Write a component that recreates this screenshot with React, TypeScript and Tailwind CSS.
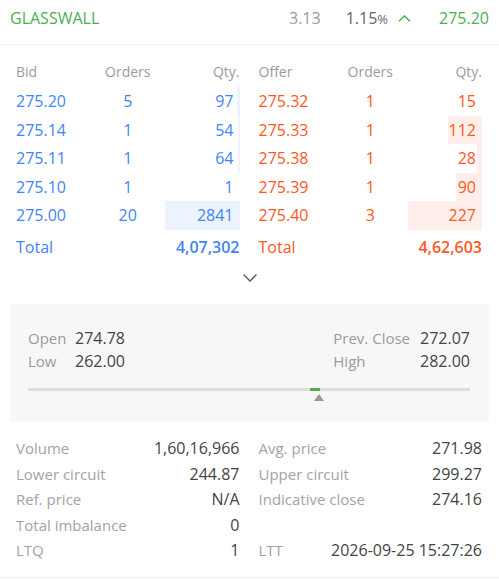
type Level = { price: string; orders: number; qty: number };

const bids: Level[] = [
  { price: '275.20', orders: 5, qty: 97 },
  { price: '275.14', orders: 1, qty: 54 },
  { price: '275.11', orders: 1, qty: 64 },
  { price: '275.10', orders: 1, qty: 1 },
  { price: '275.00', orders: 20, qty: 2841 },
];

const offers: Level[] = [
  { price: '275.32', orders: 1, qty: 15 },
  { price: '275.33', orders: 1, qty: 112 },
  { price: '275.38', orders: 1, qty: 28 },
  { price: '275.39', orders: 1, qty: 90 },
  { price: '275.40', orders: 3, qty: 227 },
];

function DepthTable({
  side,
  levels,
  total,
}: {
  side: 'bid' | 'offer';
  levels: Level[];
  total: string;
}) {
  const qtys = levels.map((l) => l.qty);
  const max = Math.max(...qtys);
  const min = Math.min(...qtys);
  const isBid = side === 'bid';
  const text = isBid ? 'text-[#4184f3]' : 'text-[#ff5722]';
  const bar = isBid ? 'bg-[#ecf2fe]' : 'bg-[#ffeee9]';

  return (
    <div>
      <div className="grid grid-cols-3 h-[30px] items-center text-[14px] text-[#9b9b9b]">
        <span>{isBid ? 'Bid' : 'Offer'}</span>
        <span className="text-center">Orders</span>
        <span className="text-right">Qty.</span>
      </div>
      {levels.map((l) => (
        <div key={l.price} className={`grid grid-cols-3 h-[28.5px] items-center ${text}`}>
          <span>{l.price}</span>
          <span className="text-center">{l.orders}</span>
          <span className="relative h-full flex items-center justify-end pr-[6px]">
            <span
              className={`absolute right-0 top-0 bottom-0 ${bar}`}
              style={{ width: `${((l.qty - min) / (max - min)) * 100}%` }}
            />
            <span className="relative">{l.qty}</span>
          </span>
        </div>
      ))}
      <div className={`flex justify-between h-[35px] items-center ${text}`}>
        <span>Total</span>
        <span className="font-semibold">{total}</span>
      </div>
    </div>
  );
}

function Stat({ label, value }: { label: string; value: string }) {
  return (
    <div className="flex justify-between h-[25.5px] items-center">
      <span className="text-[15px] text-[#a3a3a3]">{label}</span>
      <span className="text-[#444]">{value}</span>
    </div>
  );
}

export default function App() {
  return (
    <div className="w-full bg-white text-[16px] leading-6 font-['Open_Sans',sans-serif]">
      {/* Instrument header */}
      <div className="h-[45px] border-b border-[#eee] px-2.5 pt-[6px] flex items-start">
        <span className="text-[#4caf50] flex-1">GLASSWALL</span>
        <span className="text-[#9b9b9b]">3.13</span>
        <span className="text-[#666] ml-[25px]">
          1.15<span className="text-[13px]">%</span>
        </span>
        <svg className="ml-[10px] mt-[9px]" width="13" height="7" viewBox="0 0 13 7" fill="none">
          <polyline points="1,6.2 6.5,0.9 12,6.2" stroke="#4caf50" strokeWidth="1.4" />
        </svg>
        <span className="text-[#4caf50] ml-[28px]">275.20</span>
      </div>

      {/* Market depth */}
      <div className="grid grid-cols-2 gap-[19px] pl-4 pr-[17px] pt-3">
        <DepthTable side="bid" levels={bids} total="4,07,302" />
        <DepthTable side="offer" levels={offers} total="4,62,603" />
      </div>

      <div className="flex justify-center mt-[8px]">
        <svg width="16" height="10" viewBox="0 0 16 10" fill="none">
          <polyline points="1.5,1.5 8,8 14.5,1.5" stroke="#555" strokeWidth="1.3" />
        </svg>
      </div>

      {/* OHLC range */}
      <div className="mx-2.5 mt-[21px] rounded-[3px] bg-[#f7f7f7] pl-[18px] pr-[19px] pt-[23px] pb-[22px]">
        <div className="flex justify-between">
          <div className="grid grid-cols-[47px_auto]">
            <span className="h-[23px] flex items-center text-[15px] text-[#9b9b9b]">Open</span>
            <span className="h-[23px] flex items-center text-[#444]">274.78</span>
            <span className="h-[23px] flex items-center text-[15px] text-[#9b9b9b]">Low</span>
            <span className="h-[23px] flex items-center text-[#444]">262.00</span>
          </div>
          <div className="grid grid-cols-[auto_auto] gap-x-[10px]">
            <span className="h-[23px] flex items-center text-[15px] text-[#9b9b9b]">Prev. Close</span>
            <span className="h-[23px] flex items-center justify-end text-[#444]">272.07</span>
            <span className="h-[23px] flex items-center text-[15px] text-[#9b9b9b]">High</span>
            <span className="h-[23px] flex items-center justify-end text-[#444]">282.00</span>
          </div>
        </div>
        <div className="relative mt-[15px] h-[3px] bg-[#ddd]">
          <div className="absolute top-0 left-[282px] w-[10px] h-[3px] bg-[#4caf50]" />
          <div className="absolute top-[6px] left-[286px] w-0 h-0 border-l-[5px] border-r-[5px] border-b-[7px] border-l-transparent border-r-transparent border-b-[#999]" />
        </div>
        <div className="h-[9px]" />
      </div>

      {/* Session stats */}
      <div className="grid grid-cols-2 gap-[19px] pl-4 pr-[17px] mt-[14px] pb-[14px] border-b border-[#eee]">
        <div>
          <Stat label="Volume" value="1,60,16,966" />
          <Stat label="Lower circuit" value="244.87" />
          <Stat label="Ref. price" value="N/A" />
          <Stat label="Total imbalance" value="0" />
          <Stat label="LTQ" value="1" />
        </div>
        <div>
          <Stat label="Avg. price" value="271.98" />
          <Stat label="Upper circuit" value="299.27" />
          <Stat label="Indicative close" value="274.16" />
          <div className="h-[25.5px]" />
          <Stat label="LTT" value="2026-09-25 15:27:26" />
        </div>
      </div>
    </div>
  );
}
